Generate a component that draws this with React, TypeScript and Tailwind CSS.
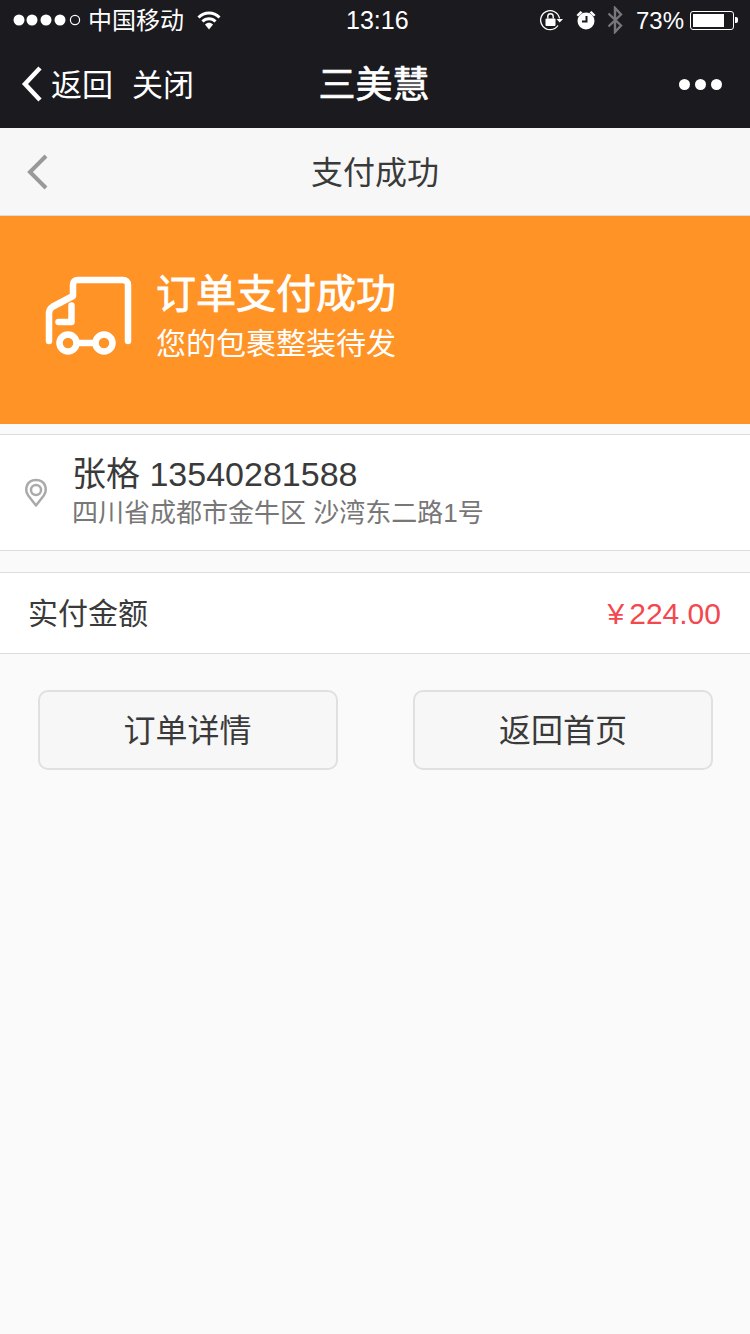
import React from "react";

function Dots() {
  return (
    <svg width="68" height="14" viewBox="0 0 68 14" className="block">
      {[6, 19, 33, 47].map((x) => (
        <circle key={x} cx={x} cy="7" r="5.500" fill="#fff" />
      ))}
      <circle cx="62" cy="7" r="4.600" fill="none" stroke="#fff" strokeWidth="1.200" />
    </svg>
  );
}

function Wifi() {
  return (
    <svg width="24" height="19" viewBox="0 0 24 19" className="block">
      <path d="M1.500 6.500C7.500 .4 16.500 .4 22.500 6.500" fill="none" stroke="#fff" strokeWidth="3" />
      <path d="M5.500 10.500C9.200 6.800 14.800 6.800 18.500 10.500" fill="none" stroke="#fff" strokeWidth="3" />
      <path d="M8 13.500C10.400 11.300 13.600 11.300 16 13.500L12 18.500Z" fill="#fff" />
    </svg>
  );
}

function RotationLock() {
  return (
    <svg width="24" height="22" viewBox="0 0 24 22" className="block">
      <path d="M19.500 9.500A9.500 9.500 0 1 0 18 16.500" fill="none" stroke="#fff" strokeWidth="1.300" />
      <path d="M16.500 10H23L19.700 13.500Z" fill="#fff" />
      <rect x="5.500" y="9.500" width="10" height="7.500" rx="1" fill="#fff" />
      <path d="M7.800 9.500V7.500a2.700 2.700 0 0 1 5.400 0V9.500" fill="none" stroke="#fff" strokeWidth="1.400" />
    </svg>
  );
}

function Alarm() {
  return (
    <svg width="20" height="20" viewBox="0 0 20 20" className="block">
      <circle cx="10" cy="11" r="8.500" fill="#fff" />
      <path d="M.5 5 4.500 1 6.500 2.600 2.200 6.500ZM19.500 5 15.500 1 13.500 2.600 17.800 6.500Z" fill="#fff" />
      <path d="M10.500 6v5.500H6" fill="none" stroke="#1a1a1f" strokeWidth="2" />
    </svg>
  );
}

function Bluetooth() {
  return (
    <svg width="16" height="28" viewBox="0 0 16 28" className="block">
      <path d="M1.500 7.500 14 19.500 8 26V2L14 8.500 1.500 20.500" fill="none" stroke="#77777a" strokeWidth="2.400" />
    </svg>
  );
}

function Battery() {
  return (
    <div className="flex items-center">
      <div className="w-[44px] h-[19px] border border-white rounded-[3px] p-[2px]">
        <div className="w-[31px] h-full bg-white" />
      </div>
      <div className="w-[3px] h-[6px] bg-white rounded-r-[2px] ml-[1px]" />
    </div>
  );
}

function Truck() {
  return (
    <svg width="90" height="84" viewBox="0 0 90 84" className="block" fill="none" stroke="#fff" strokeWidth="6.500" strokeLinecap="round" strokeLinejoin="round">
      <path d="M5 66V38.500C5 35 6.500 33 9 31.500L29 21V9.500C29 6.500 31 5 33.500 5H79C82 5 84 7 84 10V66" />
      <path d="M27.500 30.500V47H14.500" />
      <circle cx="24" cy="68" r="8.500" />
      <circle cx="60" cy="68" r="8.500" />
      <path d="M33 68H51" />
    </svg>
  );
}

function Pin() {
  return (
    <svg width="24" height="30" viewBox="0 0 24 30" className="block" fill="none" stroke="#aaaaaa" strokeWidth="2.500">
      <path d="M12 27.500 4.200 17.500C.6 12.500 1.800 2 12 2S23.400 12.500 19.800 17.500Z" strokeLinejoin="round" />
      <circle cx="12" cy="12" r="5" />
    </svg>
  );
}

export default function App() {
  return (
    <div className="w-[750px] min-h-[1334px] bg-[#fafafa] font-['Liberation_Sans','Noto_Sans_CJK_SC',sans-serif] text-[#3a3a3a]">
      <header className="bg-[#1a1a1f] text-white h-[128px]">
        <div className="relative h-[40px] flex items-center justify-between pl-[13px] pr-[12px]">
          <div className="flex items-center">
            <Dots />
            <span className="ml-[7px] text-[24px] leading-[40px] mt-[1px]">中国移动</span>
            <span className="ml-[13px]"><Wifi /></span>
          </div>
          <span className="absolute left-[346px] top-0 text-[25px] leading-[41px]">13:16</span>
          <div className="flex items-center">
            <RotationLock />
            <span className="ml-[12px]"><Alarm /></span>
            <span className="ml-[11px]"><Bluetooth /></span>
            <span className="ml-[13px] text-[24px] leading-[40px] mt-[1px]">73%</span>
            <span className="ml-[6px]"><Battery /></span>
          </div>
        </div>
        <div className="relative h-[88px] flex items-center justify-between pl-[21px] pr-[28px]">
          <div className="flex items-center">
            <svg width="22" height="38" viewBox="0 0 22 38" className="block">
              <path d="M19 3 4 19 19 35" fill="none" stroke="#fff" strokeWidth="4.500" />
            </svg>
            <span className="ml-[8px] text-[31px] leading-[40px] mt-[3px]">返回</span>
            <span className="ml-[19px] text-[31px] leading-[40px] mt-[3px]">关闭</span>
          </div>
          <span className="absolute left-0 right-0 text-center text-[37px] leading-[44px] mt-[3px] pr-[2px] [-webkit-text-stroke:0.7px_white]">三美慧</span>
          <div className="flex gap-[5px]">
            <div className="w-[11px] h-[11px] rounded-full bg-white" />
            <div className="w-[11px] h-[11px] rounded-full bg-white" />
            <div className="w-[11px] h-[11px] rounded-full bg-white" />
          </div>
        </div>
      </header>

      <div className="relative h-[88px] bg-[#f7f7f7] border-b border-[#dddddd] flex items-center pl-[26px]">
        <svg width="22" height="36" viewBox="0 0 22 36" className="block">
          <path d="M20 2 4 18 20 34" fill="none" stroke="#999999" strokeWidth="4" />
        </svg>
        <span className="absolute left-0 right-0 text-center text-[32px] leading-[44px] mt-[2px]">支付成功</span>
      </div>

      <section className="h-[208px] bg-[#ff9326] flex items-center pl-[44px] text-white">
        <div className="mt-[-6px]"><Truck /></div>
        <div className="ml-[22px] mt-[-6px]">
          <div className="text-[40px] leading-[50px] [-webkit-text-stroke:0.8px_white]">订单支付成功</div>
          <div className="text-[30px] leading-[42px] mt-[4px]">您的包裹整装待发</div>
        </div>
      </section>

      <section className="mt-[10px] h-[117px] bg-white border-y border-[#dddddd] flex items-center pl-[24px]">
        <Pin />
        <div className="ml-[24px] mt-[-3px]">
          <div className="text-[34px] leading-[44px]">张格 13540281588</div>
          <div className="text-[26px] leading-[34px] text-[#777]">四川省成都市金牛区 沙湾东二路1号</div>
        </div>
      </section>

      <section className="mt-[21px] h-[82px] bg-white border-y border-[#dddddd] flex items-center justify-between pl-[28px] pr-[29px]">
        <span className="text-[30px] leading-[40px] mt-[1px]">实付金额</span>
        <span className="text-[30px] leading-[40px] mt-[1px] text-[#f4484f] flex items-baseline">
          <span>¥</span>
          <span className="ml-[5px]">224.00</span>
        </span>
      </section>

      <div className="mt-[36px] flex justify-between pl-[38px] pr-[37px]">
        <button className="w-[300px] h-[80px] pt-[2px] pr-[1px] bg-[#f7f7f7] border-2 border-[#e0e0e0] rounded-[10px] text-[32px] text-[#3a3a3a]">订单详情</button>
        <button className="w-[300px] h-[80px] pt-[2px] bg-[#f7f7f7] border-2 border-[#e0e0e0] rounded-[10px] text-[32px] text-[#3a3a3a]">返回首页</button>
      </div>
    </div>
  );
}
